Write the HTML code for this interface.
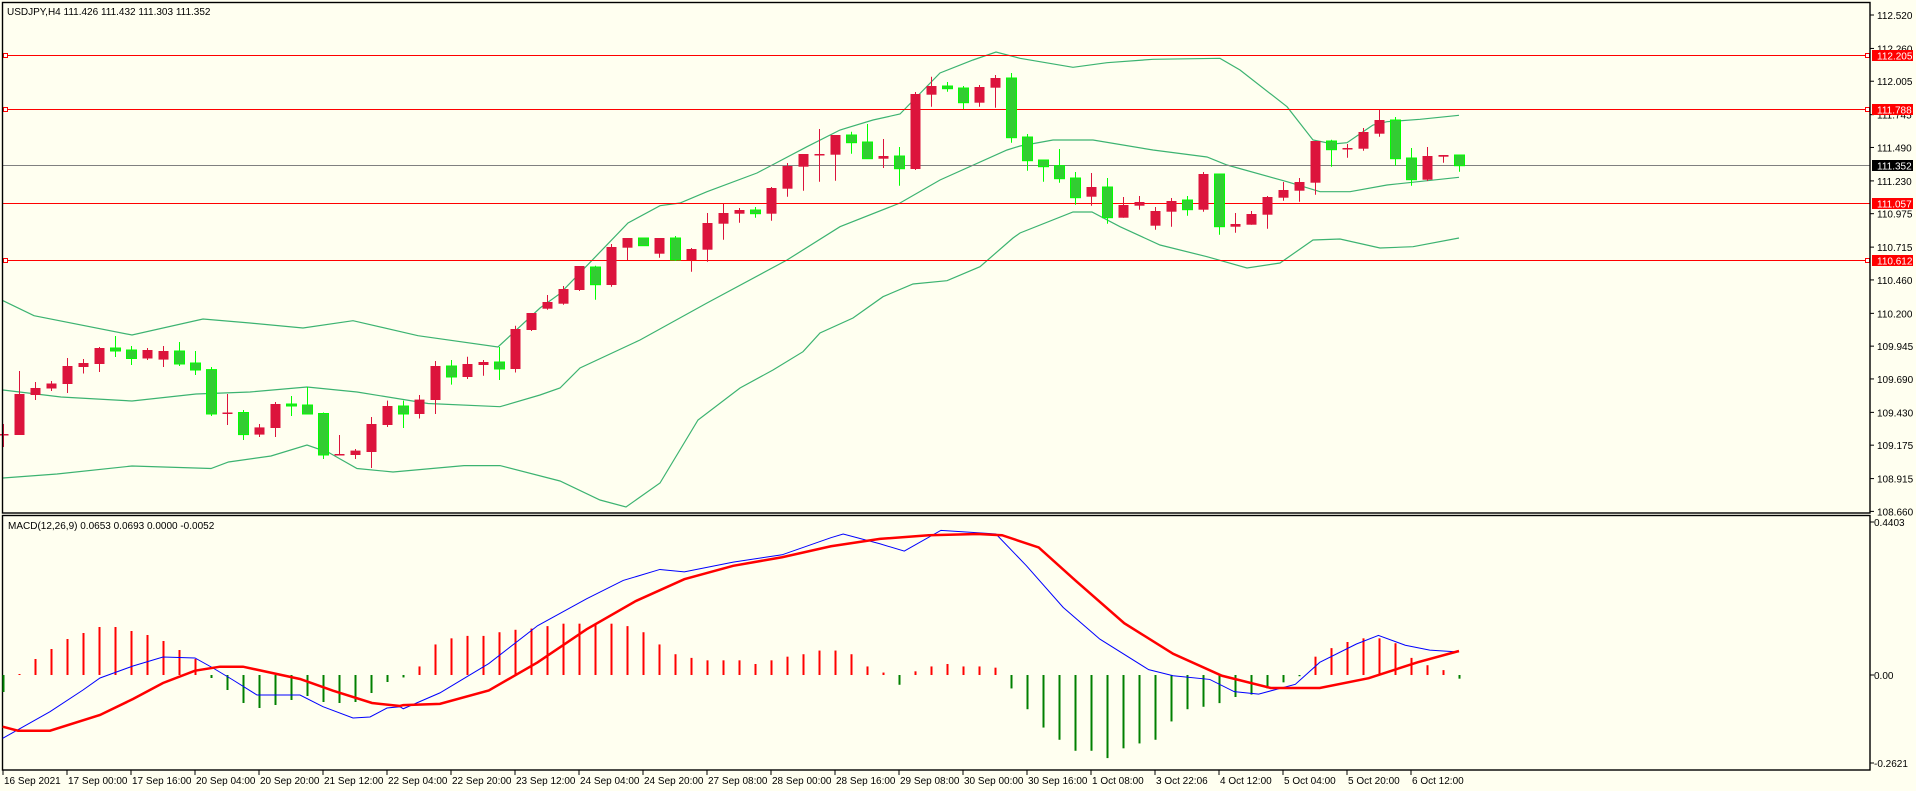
<!DOCTYPE html>
<html><head><meta charset="utf-8"><style>
html,body{margin:0;padding:0;background:#fffff0;}
svg{display:block;}
text{font-family:"Liberation Sans",sans-serif;font-size:10px;fill:#000;}
</style></head><body>
<svg id="c" width="1916" height="791" xmlns="http://www.w3.org/2000/svg"></svg>
<script>
var s=[];
function A(x){s.push(x);}
A('<rect width="1916" height="791" fill="#fffff0"/>');
function py(p){return 15+(112.52-p)*128.6;}
function pl(pts,col,w){A('<polyline fill="none" stroke="'+col+'" stroke-width="'+w+'" points="'+pts.map(function(p){return p[0]+','+p[1]}).join(' ')+'"/>');}
var up=[[3,300.7],[34,315.7],[132,335],[203,319],[250,323],[303,328],[353,320.7],[418,335.7],[498,347],[540,308],[560,293.6],[628,223],[660,205.7],[680,203],[707,191.7],[757,173],[807,146.7],[840,130],[873,120],[900,114],[940,73],[973,60],[996,52],[1020,58.3],[1073,67.3],[1107,62.7],[1153,59.3],[1220,58.3],[1240,70],[1287,106.7],[1313,140],[1333,144],[1347,142.7],[1373,125],[1387,121.7],[1420,119.3],[1459,115.3]];
var mid=[[3,390],[61,397],[132,401],[196,394],[250,392],[307,387],[357,392],[428,403.5],[500,406.7],[540,395],[560,388],[580,368],[640,340],[707,303],[787,260],[840,226.7],[900,203],[940,180],[1007,150],[1020,146],[1053,140],[1093,140],[1153,150],[1207,157],[1227,165],[1287,181.7],[1320,191.7],[1350,191.7],[1387,185],[1459,177.3]];
var lo=[[3,478],[57,474],[132,466],[211,468.5],[228.5,462],[271,456],[307,445],[328.5,452.4],[357,468.5],[393,472],[464,465.6],[500,465.6],[560,481],[600,500],[626,507],[660,483],[698,420],[740,388],[773,370],[803,351.7],[820,333],[853,318],[883,296.7],[913,284],[947,280.7],[980,266.7],[1013,238],[1020,233],[1073,212],[1092,212],[1120,226.7],[1160,245],[1207,256.7],[1247,268],[1280,263],[1313,240],[1340,239],[1380,248],[1413,246.7],[1459,238]];
pl(up,'#3cb371',1.2);pl(mid,'#3cb371',1.2);pl(lo,'#3cb371',1.2);
A('<line x1="3" x2="1870" y1="165.5" y2="165.5" stroke="#808080" stroke-width="1"/>');
[[55.5,1],[109.5,1],[203.5,0],[260.5,1]].forEach(function(l){
 A('<line x1="3" x2="1870" y1="'+l[0]+'" y2="'+l[0]+'" stroke="#ff0000" stroke-width="1"/>');
 if(l[1]){A('<rect x="3.5" y="'+(l[0]-2)+'" width="4" height="4" fill="#fff" stroke="#ff0000"/>');
 A('<rect x="1865.5" y="'+(l[0]-2)+'" width="4" height="4" fill="#fff" stroke="#ff0000"/>');}
});
var C=[[434,435.5,424,447,0],[394,435,371,435,0],[388,395,382,400,0],[383.5,388.5,381,391,0],[366,384,358,393,0],[363,367,359,373.5,0],[348,364,347,372,0],[348,351,336,357,1],[350,358.5,346,365,1],[350,358.5,348,360,0],[351,359.6,346,367,0],[351,364,342,366,1],[363,370,351,375,1],[369.6,414,367,416,1],[412.5,414,394,425,0],[412.5,434.6,410,440,1],[427.4,434.6,424,437,0],[404,428,402,437,0],[404,406,396,416,1],[405,414,387,414,1],[413.5,455,412.5,459,1],[454,455.5,435,455,0],[450.6,455,449,459,0],[424,452,417,468,0],[406,425,400.6,427,0],[406,414,400.6,428,1],[399.6,414,395,418.5,0],[366,400,361,414,0],[366,377,360,384.6,1],[364,377,356.7,379,0],[362,365,360,375.7,0],[362,369,347,380,1],[329,369,325.7,372.5,0],[313,330,313,331,0],
[302,308.7,295,309.7,0],[289,303.7,286,304.7,0],[266,290,266,291,0],[267,284.7,265.7,299.7,1],[247,285,244,286.7,0],[238,247.7,238,260,0],[238,245.7,238,245.7,1],[238,253.7,238,257.7,0],[238,260,236,261,1],[249,260,248,271.7,0],[223,249.7,213,261.7,0],[213,223.7,203.7,239.7,0],[210,213.7,208,222.7,0],[210,213.7,207,217.7,1],[188,213.7,187,220.7,0],[166,188.7,163,196.7,0],[154,166.7,154,190.7,0],[154,155.5,129,181.7,0],[135,154.7,135,180.7,0],[135,142.7,131.7,153.7,1],[142,158.7,124,158.7,1],[156,158.7,139,168,0],[156,168.7,147,185.7,1],[94,169,92,170,0],[86,94.7,76.7,106.7,0],[86,88.7,82,91.7,1],[88,102.7,86,109,1],[87,102.7,85,106.7,0],[78,87.7,75,107.7,0],[78,137.7,73,142.7,1],
[137,160.7,134,170.7,1],[160,166.7,160,181.7,1],[165.7,178.7,149,182.7,1],[178,197.7,172,204.7,1],[187,196.7,173,205.7,0],[187,217.7,178,223.7,1],[205,217.7,197,217.7,0],[202,205.7,196,209.7,0],[211,225.7,207,229.7,0],[201,211.7,198,226.7,0],[200,209.7,196,215.7,1],[174,209.7,172,211.7,0],[174,226.7,174,234.7,1],[224,226.7,213,232.7,0],[214,224.7,211,224.7,0],[197,214.7,196,228.7,0],[190,197.7,182,200.7,0],[182,190.7,178,201.7,0],[141,182.7,141,194.7,0],[141,149.7,139.7,166.7,1],[148,149.5,144,157.7,0],[132,148.7,128,150.7,0],[120,133.7,109.7,136.7,0],[120,158.7,117,165.7,1],[158,179.7,148,185.7,1],[156,179.7,147,181,0],[155,156.7,155,162.7,0],[155,165.7,155,171.7,1]];
C.forEach(function(c,i){
 var x=3+16*i, g=c[4], wc=g?'#00ff00':'#dc143c', bc=g?'#32cd32':'#dc143c';
 A('<line x1="'+(x+.5)+'" x2="'+(x+.5)+'" y1="'+c[2]+'" y2="'+c[3]+'" stroke="'+wc+'" stroke-width="1"/>');
 var h=Math.max(c[1]-c[0],1.5);
 A('<rect x="'+(x-4.5)+'" y="'+c[0]+'" width="10" height="'+h+'" fill="'+bc+'" stroke="'+wc+'" stroke-width="'+(g?1:0)+'"/>');
});
A('<rect x="2.5" y="2.5" width="1867.5" height="510.5" fill="none" stroke="#000" stroke-width="1.4"/>');
A('<rect x="2.5" y="515.5" width="1867.5" height="254.5" fill="none" stroke="#000" stroke-width="1.4"/>');
A('<text x="7" y="15">USDJPY,H4  111.426 111.432 111.303 111.352</text>');
A('<text x="8" y="529">MACD(12,26,9) 0.0653 0.0693 0.0000 -0.0052</text>');
var P=[112.520,112.260,112.005,111.745,111.490,111.230,110.975,110.715,110.460,110.200,109.945,109.690,109.430,109.175,108.915,108.660];
P.forEach(function(p){var y=py(p);A('<line x1="1870" x2="1874" y1="'+y+'" y2="'+y+'" stroke="#000"/>');A('<text x="1877" y="'+(y+4)+'">'+p.toFixed(3)+'</text>');});
[[55.5,'112.205','#ff0000'],[109.5,'111.788','#ff0000'],[165.5,'111.352','#000'],[203.5,'111.057','#ff0000'],[260.5,'110.612','#ff0000']].forEach(function(l){
 A('<rect x="1872" y="'+(l[0]-5.5)+'" width="41" height="11" fill="'+l[2]+'"/>');
 A('<text x="1877" y="'+(l[0]+4)+'" style="fill:#fff">'+l[1]+'</text>');});
var z=675;
var H=[-17,1,16,26,36,42,48,48,44,40,34,25,16,-3,-15,-28,-33,-30,-25,-21,-27,-28,-27,-18,-7];
var D=[-2,7,25,30,32,32,35,37,38,40,42,42,42,42,40,35,25,17,14,12,12,12,9,12,15,17,20,20,17,7,2,-8,3,7,9,7,7,6,-11,-28,-43,-53,-62,-62,-68,-60,-56,-53,-38,-28,-26,-23,-18,-16,-11,-6,-1,15,22,27,30,30,26,14,8,4,-3];
D.forEach(function(d){H.push(d*1.222);});
H.forEach(function(h,i){var x=3+16*i; if(Math.abs(h)<1)h=h<0?-1.5:1.5;
 A('<rect x="'+(x-0.5)+'" y="'+(h>0?z-h:z)+'" width="2" height="'+Math.abs(h)+'" fill="'+(h>0?'#ff0000':'#008000')+'"/>');});
function cv(a){return a.map(function(p){return [p[0]*1.222,p[1]*1.222];});}
var blue=[[2.7,738.3],[50,711.7],[83,690],[100,678],[133,666],[163,657],[195,658],[213,668],[233,680],[257,695],[300,695],[323,706.7],[353,718],[370,717],[387,708],[400,706.7]].concat(cv([[330,580],[360,567],[400,543],[440,512],[480,490],[510,475],[540,466],[560,468],[600,460],[640,454],[680,440],[690,437],[720,445],[740,451],[770,434],[800,436],[815,437],[840,463],[870,497],[900,523],[940,548],[960,553],[990,556],[1010,566],[1030,568],[1060,560],[1080,542],[1110,527],[1128,520],[1150,528],[1170,532]])).concat([[1459,652]]);
var red=[[2.7,726.7],[18,730.7],[50,730.7],[100,715],[133,699],[163,683],[195,670.7],[220,666.7],[243,666.7],[300,679],[333,690.7],[372,703],[400,706]].concat(cv([[330,577],[360,576],[400,565],[440,542],[480,515],[520,492],[560,474],[600,463],[640,456],[680,447],[720,441],[760,438],[800,437],[820,438],[850,448],[880,475],[920,510],[960,535],[1000,553],[1040,563],[1080,563],[1120,555],[1160,542]])).concat([[1459,651]]);
pl(blue,'#0000ff',1);pl(red,'#ff0000',2.5);
[[522,'0.4403'],[675,'0.00'],[763,'-0.2621']].forEach(function(l){A('<line x1="1870" x2="1874" y1="'+l[0]+'" y2="'+l[0]+'" stroke="#000"/>');A('<text x="1874" y="'+(l[0]+4)+'">'+l[1]+'</text>');});
var T=['16 Sep 2021','17 Sep 00:00','17 Sep 16:00','20 Sep 04:00','20 Sep 20:00','21 Sep 12:00','22 Sep 04:00','22 Sep 20:00','23 Sep 12:00','24 Sep 04:00','24 Sep 20:00','27 Sep 08:00','28 Sep 00:00','28 Sep 16:00','29 Sep 08:00','30 Sep 00:00','30 Sep 16:00','1 Oct 08:00','3 Oct 22:06','4 Oct 12:00','5 Oct 04:00','5 Oct 20:00','6 Oct 12:00'];
T.forEach(function(t,k){var x=3+64*k;A('<line x1="'+x+'" x2="'+x+'" y1="770" y2="775" stroke="#000"/>');A('<text x="'+(x+1)+'" y="784">'+t+'</text>');});
document.getElementById('c').innerHTML=s.join('');
</script>
</body></html>
